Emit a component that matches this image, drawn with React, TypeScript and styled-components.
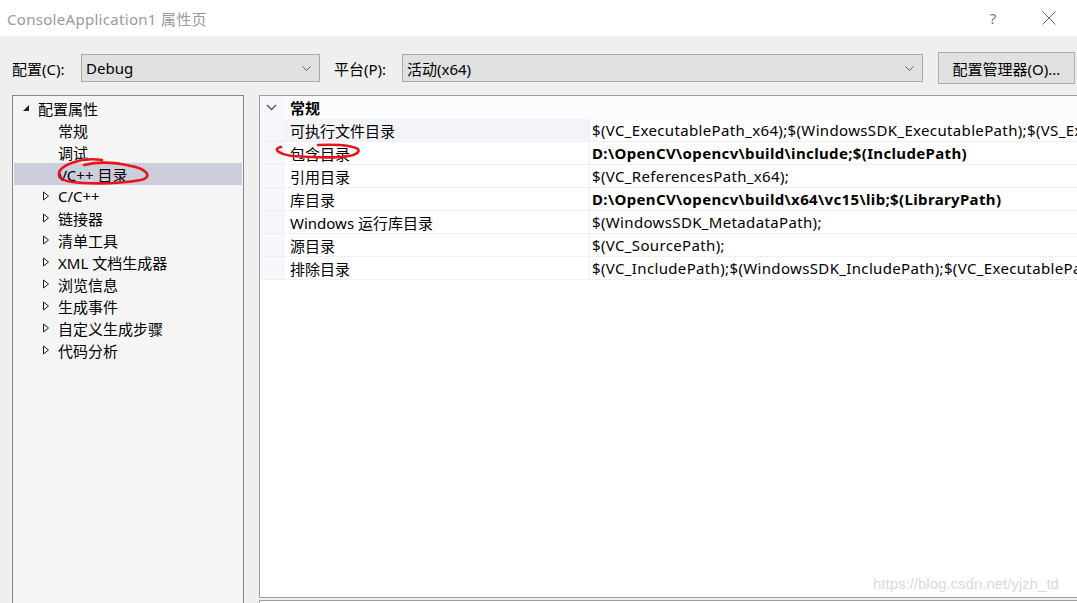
import React from "react";
import styled, { createGlobalStyle } from "styled-components";

const GlobalStyle = createGlobalStyle`
  html, body {
    margin: 0;
    padding: 0;
    overflow: hidden;
    background: #efefef;
  }
  * { box-sizing: border-box; }
`;

const FONT = `"Noto Sans", "Noto Sans CJK SC", sans-serif`;

const Window = styled.div`
  position: relative;
  width: 1077px;
  height: 603px;
  display: flex;
  flex-direction: column;
  font-family: ${FONT};
  font-size: 15px;
  color: #000;
  overflow: hidden;
`;

const TitleBar = styled.div`
  height: 36px;
  flex: none;
  background: #fff;
  display: flex;
  align-items: center;
  padding-left: 7px;
`;

const Title = styled.div`
  flex: 1;
  color: #9a9a9a;
  font-size: 15px;
  letter-spacing: 0.3px;
`;

const TitleButton = styled.div`
  width: 56px;
  height: 36px;
  display: flex;
  align-items: center;
  justify-content: center;
  color: #7a7a7a;
  font-size: 15px;
`;

const Body = styled.div`
  flex: 1;
  background: #efefef;
  padding-left: 12px;
  display: flex;
  flex-direction: column;
  min-height: 0;
`;

const Toolbar = styled.div`
  margin-top: 16px;
  height: 32px;
  display: flex;
  align-items: center;
  flex: none;
`;

const FieldLabel = styled.label<{ $w: number; $ml?: number }>`
  width: ${(p) => p.$w}px;
  margin-left: ${(p) => p.$ml ?? 0}px;
  font-size: 15px;
  white-space: nowrap;
`;

const Select = styled.div<{ $w: number }>`
  width: ${(p) => p.$w}px;
  height: 28px;
  background: #e1e1e1;
  border: 1px solid #a9a9a9;
  display: flex;
  align-items: center;
  padding: 0 8px 0 4px;
  font-size: 15px;
  & > span { flex: 1; }
`;

const Button = styled.button`
  margin-left: 15px;
  width: 137px;
  height: 32px;
  background: #e1e1e1;
  border: 1px solid #adadad;
  font-family: ${FONT};
  font-size: 15px;
  color: #000;
  padding: 0;
`;

const Main = styled.div`
  margin-top: 11px;
  flex: 1;
  display: flex;
  gap: 15px;
  min-height: 0;
`;

const TreePanel = styled.div`
  width: 232px;
  flex: none;
  height: 520px;
  background: #f5f5f5;
  border: 1px solid #828790;
  padding-top: 1px;
`;

const TreeRow = styled.div<{ $selected?: boolean; $level: number }>`
  height: 22px;
  margin: 0 1px;
  display: flex;
  align-items: center;
  padding-left: ${(p) => (p.$level === 0 ? 8 : 28)}px;
  background: ${(p) => (p.$selected ? "#cccedb" : "transparent")};
  white-space: nowrap;
`;

const Expander = styled.span`
  width: 16px;
  height: 22px;
  flex: none;
  display: flex;
  align-items: center;
`;

const RightCol = styled.div`
  width: 830px;
  flex: none;
  display: flex;
  flex-direction: column;
`;

const GridPanel = styled.div`
  height: 503px;
  flex: none;
  background: #fff;
  border: 1px solid #a0a0a0;
  border-right: none;
`;

const DescPanel = styled.div`
  margin-top: 2px;
  flex: 1;
  background: #fff;
  border-top: 1px solid #a0a0a0;
  border-left: 1px solid #a0a0a0;
`;

const GridRow = styled.div<{ $header?: boolean }>`
  display: flex;
  height: 23px;
  border-bottom: 1px solid ${(p) => (p.$header ? "transparent" : "#f0f0f0")};
  background: ${(p) => (p.$header ? "#fbfcfd" : "#fff")};
`;

const Stripe = styled.div`
  width: 25px;
  flex: none;
  background: #f5f7fa;
  display: flex;
  align-items: center;
  padding-left: 6px;
`;

const NameCell = styled.div<{ $focus?: boolean; $bold?: boolean; $plain?: boolean }>`
  width: 305px;
  flex: none;
  display: flex;
  align-items: center;
  padding-left: 5px;
  border-right: 1px solid ${(p) => (p.$plain ? "transparent" : "#f0f0f0")};
  background: ${(p) => (p.$focus ? "#f2f4f8" : "transparent")};
  font-weight: ${(p) => (p.$bold ? 700 : 400)};
  white-space: nowrap;
`;

const ValueCell = styled.div<{ $bold?: boolean }>`
  flex: 1;
  display: flex;
  align-items: center;
  padding-left: 2px;
  font-weight: ${(p) => (p.$bold ? 700 : 400)};
  letter-spacing: 0.35px;
  white-space: nowrap;
  overflow: hidden;
`;

const Annotation = styled.svg`
  position: absolute;
  left: 0;
  top: 0;
  pointer-events: none;
`;

const Watermark = styled.div`
  position: absolute;
  left: 873px;
  top: 575px;
  font-family: "Liberation Sans", Arial, sans-serif;
  font-size: 15px;
  color: #dadada;
`;

const Chevron = () => (
  <svg width="9" height="5" viewBox="0 0 9 5">
    <path d="M0.5 0.5 L4.5 4.5 L8.5 0.5" fill="none" stroke="#606060" strokeWidth="1" />
  </svg>
);

const OpenTri = () => (
  <svg width="8" height="8" viewBox="0 0 8 8">
    <path d="M7 1 L7 7 L1 7 Z" fill="#1e1e1e" />
  </svg>
);

const ClosedTri = () => (
  <svg width="8" height="10" viewBox="0 0 8 10">
    <path d="M1.5 1 L6.5 5 L1.5 9 Z" fill="none" stroke="#1e1e1e" strokeWidth="1" />
  </svg>
);

type TreeItem = { label: string; level: number; exp: "open" | "closed" | "none"; selected?: boolean };

const tree: TreeItem[] = [
  { label: "配置属性", level: 0, exp: "open" },
  { label: "常规", level: 1, exp: "none" },
  { label: "调试", level: 1, exp: "none" },
  { label: "VC++ 目录", level: 1, exp: "none", selected: true },
  { label: "C/C++", level: 1, exp: "closed" },
  { label: "链接器", level: 1, exp: "closed" },
  { label: "清单工具", level: 1, exp: "closed" },
  { label: "XML 文档生成器", level: 1, exp: "closed" },
  { label: "浏览信息", level: 1, exp: "closed" },
  { label: "生成事件", level: 1, exp: "closed" },
  { label: "自定义生成步骤", level: 1, exp: "closed" },
  { label: "代码分析", level: 1, exp: "closed" },
];

type Prop = { name: string; value: string; bold?: boolean };

const props: Prop[] = [
  { name: "可执行文件目录", value: "$(VC_ExecutablePath_x64);$(WindowsSDK_ExecutablePath);$(VS_ExecutablePath);$(MSBuild_ExecutablePath)" },
  { name: "包含目录", value: "D:\\OpenCV\\opencv\\build\\include;$(IncludePath)", bold: true },
  { name: "引用目录", value: "$(VC_ReferencesPath_x64);" },
  { name: "库目录", value: "D:\\OpenCV\\opencv\\build\\x64\\vc15\\lib;$(LibraryPath)", bold: true },
  { name: "Windows 运行库目录", value: "$(WindowsSDK_MetadataPath);" },
  { name: "源目录", value: "$(VC_SourcePath);" },
  { name: "排除目录", value: "$(VC_IncludePath);$(WindowsSDK_IncludePath);$(VC_ExecutablePath_x64);$(VC_LibraryPath_x64)" },
];

export default function App() {
  return (
    <Window>
      <GlobalStyle />
      <TitleBar>
        <Title>ConsoleApplication1 属性页</Title>
        <TitleButton>?</TitleButton>
        <TitleButton>
          <svg width="14" height="14" viewBox="0 0 14 14">
            <path d="M0.5 0.5 L13.5 13.5 M13.5 0.5 L0.5 13.5" stroke="#6a6a6a" strokeWidth="1" />
          </svg>
        </TitleButton>
      </TitleBar>
      <Body>
        <Toolbar>
          <FieldLabel $w={69}>配置(C):</FieldLabel>
          <Select $w={239}>
            <span>Debug</span>
            <Chevron />
          </Select>
          <FieldLabel $w={68} $ml={14}>平台(P):</FieldLabel>
          <Select $w={521}>
            <span>活动(x64)</span>
            <Chevron />
          </Select>
          <Button>配置管理器(O)...</Button>
        </Toolbar>
        <Main>
          <TreePanel>
            {tree.map((t) => (
              <TreeRow key={t.label} $level={t.level} $selected={t.selected}>
                <Expander>
                  {t.exp === "open" && <OpenTri />}
                  {t.exp === "closed" && <ClosedTri />}
                </Expander>
                {t.label}
              </TreeRow>
            ))}
          </TreePanel>
          <RightCol>
            <GridPanel>
              <GridRow $header>
                <Stripe>
                  <svg width="11" height="7" viewBox="0 0 11 7">
                    <path d="M1 1 L5.5 5.5 L10 1" fill="none" stroke="#555" strokeWidth="1.4" />
                  </svg>
                </Stripe>
                <NameCell $bold $plain>常规</NameCell>
                <ValueCell />
              </GridRow>
              {props.map((p, i) => (
                <GridRow key={p.name}>
                  <Stripe />
                  <NameCell $focus={i === 0}>{p.name}</NameCell>
                  <ValueCell $bold={p.bold}>{p.value}</ValueCell>
                </GridRow>
              ))}
            </GridPanel>
            <DescPanel />
          </RightCol>
        </Main>
      </Body>
      <Annotation width="1077" height="603" viewBox="0 0 1077 603">
        <path
          d="M102 160 C82 157 57 165 59 176 C61 185 112 185 141 180 C153 177 147 169 131 166 C114 162 96 162 84 165"
          fill="none"
          stroke="#e8141b"
          strokeWidth="2.6"
          strokeLinecap="round"
        />
        <path
          d="M318 145 C345 144 362 147 358 152 C354 159 322 158 292 156 C279 154 272 149 281 147"
          fill="none"
          stroke="#e8141b"
          strokeWidth="2.6"
          strokeLinecap="round"
        />
      </Annotation>
      <Watermark>https://blog.csdn.net/yjzh_td</Watermark>
    </Window>
  );
}
